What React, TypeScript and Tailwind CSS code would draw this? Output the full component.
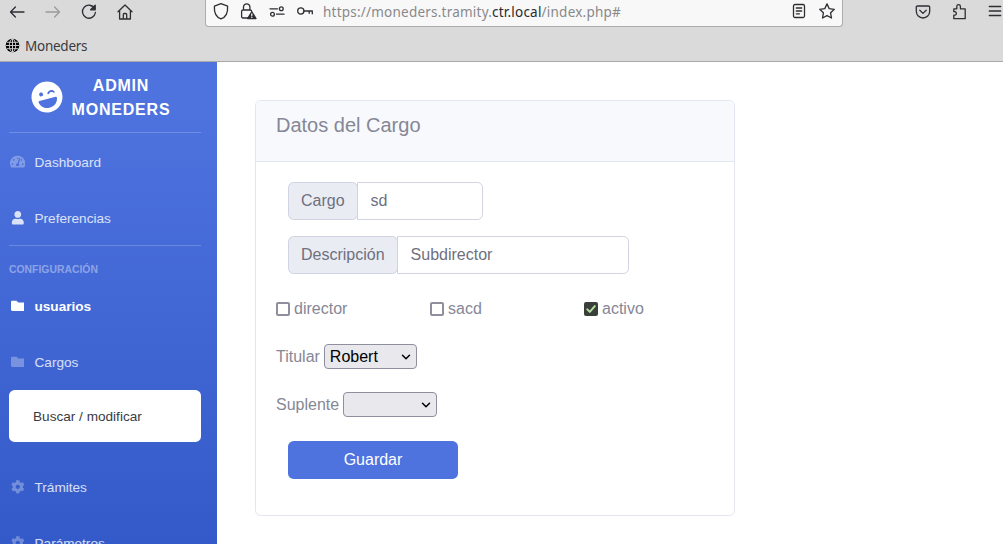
import React from 'react';
import { FaCog, FaFolder, FaLaughWink, FaTachometerAlt, FaUser } from 'react-icons/fa';

function Glyph({ children, className = '' }: { children: React.ReactNode; className?: string }) {
  return (
    <svg
      viewBox="0 0 18 18"
      fill="none"
      stroke="currentColor"
      strokeWidth="1.3"
      strokeLinecap="round"
      strokeLinejoin="round"
      className={`h-[18px] w-[18px] shrink-0 ${className}`}
    >
      {children}
    </svg>
  );
}

function BrowserBar() {
  return (
    <header className="h-[62px] border-b border-[#a9a9ac] bg-[#dadada] font-['Noto_Sans',sans-serif] text-[#2e2e33]">
      <div className="flex h-[27px]">
        <div className="flex w-[205px] shrink-0 items-start gap-[18px] pt-[3px] pl-2">
          <Glyph><path d="M2.500 9H16M7.400 4 2.500 9l4.900 5" /></Glyph>
          <Glyph className="text-[#9a9a9a]"><path d="M2 9h13.500M10.600 4l4.900 5-4.900 5" /></Glyph>
          <Glyph>
            <path d="M14.600 5.500A6.500 6.500 0 1 0 15.400 9.500" />
            <path d="M15.200 2.200v4.600h-4.600z" fill="currentColor" />
          </Glyph>
          <Glyph>
            <path d="M2 8.800 9 2l7 6.800M3.600 7.600V16h10.800V7.600M7.300 15.800v-4.300q0-1 1-1h1.400q1 0 1 1v4.300" />
          </Glyph>
        </div>
        <div className="flex w-[638px] shrink-0 items-start rounded-b border border-t-0 border-[#ababad] bg-[#f8f8f8] pt-[2px] pl-[6px]">
          <Glyph><path d="M9 1.700 15.600 4.200c.4 5.900-1.200 10.700-6.600 12.700C3.600 14.900 2 10.100 2.400 4.200Z" /></Glyph>
          <Glyph className="ml-[9px]">
            <path d="M9 16H4q-1.400 0-1.400-1.400V9.300Q2.600 8 4 8h7.200q1.400 0 1.400 1.200M4.500 8V5a3.200 3.200 0 0 1 6.400 0v3" />
            <path d="M12.800 9.800 17 16.500H8.600Z" fill="currentColor" />
            <path d="M12.800 11.800v2M12.800 15.300v.1" stroke="#f8f8f8" strokeWidth="1.200" />
          </Glyph>
          <Glyph className="ml-[11px]">
            <path d="M2 6.800h7.500M8.500 12.200H16" />
            <circle cx="13.300" cy="6.800" r="1.900" />
            <circle cx="4.500" cy="12.200" r="1.900" />
          </Glyph>
          <Glyph className="ml-[10px]">
            <circle cx="4.800" cy="9" r="3.100" />
            <path d="M8 9h8.300v2.800M13.200 9v2.300" />
          </Glyph>
          <span className="ml-[9px] w-[467px] shrink-0 text-[13.500px] leading-5 tracking-[0.220px] whitespace-nowrap text-[#88888b]">
            https://moneders.tramity.<span className="text-[#2a2a2e]">ctr.local</span>/index.php#
          </span>
          <Glyph>
            <rect x="3.500" y="2.500" width="11" height="13" rx="1.500" />
            <path d="M6.300 6h5.400M6.300 9h5.400M6.300 11.800h3.200" />
          </Glyph>
          <Glyph className="ml-[10px]">
            <path d="m9 1.900 2.200 4.700 5.100.7-3.700 3.500.9 5.200L9 13.600 4.500 16l.9-5.200L1.700 7.300l5.100-.7Z" />
          </Glyph>
        </div>
        <div className="flex items-start pt-[3px] pl-[71px]">
          <Glyph>
            <path d="M3.500 3h11q1.200 0 1.200 1.200v4.100a6.700 6.700 0 0 1-13.400 0V4.200Q2.300 3 3.500 3ZM5.800 7.300 9 10.400l3.200-3.100" />
          </Glyph>
          <Glyph className="ml-[18px]">
            <path d="M3.800 5.800h3V3.500a1.800 1.800 0 0 1 3.600 0v2.300h4.800v9.900H3.800v-3.500H5a1.800 1.800 0 0 0 0-3.500H3.800Z" />
          </Glyph>
          <Glyph className="ml-[18px]"><path d="M3.300 3.500h11.400M3.300 8h11.400M3.300 12.500h11.400" /></Glyph>
        </div>
      </div>
      <div className="flex h-[34px] items-center gap-[5px] pt-[3px] pl-[5px]">
        <svg viewBox="0 0 15 15" className="h-[15px] w-[15px] text-black" fill="none" stroke="#dadada" strokeWidth="0.900">
          <circle cx="7.500" cy="7.500" r="6.800" fill="currentColor" stroke="none" />
          <ellipse cx="7.500" cy="7.500" rx="3.200" ry="6.300" />
          <path d="M7.500 1v13M1 7.500h13M2 4.300h11M2 10.700h11" />
        </svg>
        <span className="pt-px text-[13.500px] tracking-[-0.250px] text-[#3a3a3e]">Moneders</span>
      </div>
    </header>
  );
}

function NavItem({ icon, label, active = false }: { icon: React.ReactNode; label: string; active?: boolean }) {
  return (
    <a
      className={`flex h-14 shrink-0 items-center text-[13.600px] ${active ? 'font-bold text-white' : 'text-white/80'}`}
    >
      <span className="mr-[8.500px] flex w-[17px] justify-center">{icon}</span>
      <span className="pt-[2px]">{label}</span>
    </a>
  );
}

function Sidebar() {
  return (
    <nav className="flex w-[217px] shrink-0 flex-col overflow-hidden bg-linear-to-b from-[#4e73df] from-10% to-[#345ac9] pr-4 pl-[9px]">
      <div className="flex h-[70px] shrink-0 items-center pl-[22px] text-base font-bold tracking-[0.800px] text-white">
        <FaLaughWink className="h-8 w-8 -rotate-15" />
        <div className="ml-2 w-[100px] pt-[2px] text-center leading-6">ADMIN MONEDERS</div>
      </div>
      <hr className="border-white/20" />
      <div className="h-px shrink-0" />
      <NavItem icon={<FaTachometerAlt className="h-[15.300px] w-[15.300px] shrink-0 text-white/30" />} label="Dashboard" />
      <NavItem icon={<FaUser className="text-[13.600px] text-white/80" />} label="Preferencias" />
      <hr className="-mt-px border-white/20" />
      <div className="mt-4 h-4 shrink-0 text-[10.400px] leading-4 font-bold text-white/40">CONFIGURACIÓN</div>
      <NavItem icon={<FaFolder className="text-[13.600px] text-white" />} label="usuarios" active />
      <NavItem icon={<FaFolder className="text-[13.600px] text-white/30" />} label="Cargos" />
      <div className="mb-[17px] flex h-[52px] shrink-0 items-center rounded-[5.600px] bg-white pt-[2px] pl-6 text-[13.600px] text-[#3a3b45]">
        Buscar / modificar
      </div>
      <NavItem icon={<FaCog className="text-[13.600px] text-white/30" />} label="Trámites" />
      <NavItem icon={<FaCog className="text-[13.600px] text-white/30" />} label="Parámetros" />
    </nav>
  );
}

function Field({ label, value, width }: { label: string; value: string; width: string }) {
  return (
    <div className="flex h-[38px] text-[#6e707e]">
      <label className="flex items-center rounded-[5.600px] border border-[#d1d3e2] bg-[#eaecf4] px-3">{label}</label>
      <input
        aria-label={label}
        defaultValue={value}
        className={`-ml-px rounded-r-[5.600px] border border-[#d1d3e2] bg-white pr-3 pl-[13px] ${width}`}
      />
    </div>
  );
}

function Check({ label, checked = false }: { label: string; checked?: boolean }) {
  return (
    <label className="flex w-[154px] shrink-0 items-center gap-1">
      {checked ? (
        <svg viewBox="0 0 14 14" className="h-[14px] w-[14px]" fill="none">
          <rect width="14" height="14" rx="2" fill="#39403a" />
          <path d="m3.300 7.300 2.500 2.600 5-5.800" stroke="#b9dfa4" strokeWidth="1.900" strokeLinecap="round" strokeLinejoin="round" />
        </svg>
      ) : (
        <span className="h-[14px] w-[14px] rounded-[2px] border-2 border-[#8f8f9d] bg-white" />
      )}
      {label}
    </label>
  );
}

function Picker({ label, value, width }: { label: string; value: string; width: string }) {
  return (
    <div className="flex h-[25px] items-center gap-[4px]">
      {label}
      <button
        className={`flex h-[25px] items-center justify-between rounded-[4px] border border-[#8f8f9d] bg-[#e9e9ed] pr-[5px] pl-[5px] text-black ${width}`}
      >
        <span>{value}</span>
        <svg viewBox="0 0 10 10" className="h-[10px] w-[10px]" fill="none" stroke="currentColor" strokeWidth="1.500" strokeLinecap="round" strokeLinejoin="round">
          <path d="m1.500 3.300 3.500 3.500 3.500-3.500" />
        </svg>
      </button>
    </div>
  );
}

export default function App() {
  return (
    <div className="flex h-[544px] w-[1003px] flex-col overflow-hidden bg-white">
      <BrowserBar />
      <div className="flex min-h-0 flex-1 font-['Liberation_Sans',Arial,sans-serif] text-base">
        <Sidebar />
        <main className="pt-[38px] pl-[38px] text-[#858796]">
          <section className="h-[416px] w-[480px] overflow-hidden rounded-[5.600px] border border-[#e3e6f0]">
            <h1 className="h-[61px] border-b border-[#e3e6f0] bg-[#f8f9fc] pt-3 pl-5 text-xl leading-6">
              Datos del Cargo
            </h1>
            <form className="flex flex-col px-5 pt-5" onSubmit={(e) => e.preventDefault()}>
              <div className="flex flex-col gap-4 pl-3">
                <Field label="Cargo" value="sd" width="w-[126px]" />
                <Field label="Descripción" value="Subdirector" width="w-[232px]" />
              </div>
              <div className="mt-[23px] flex h-6">
                <Check label="director" />
                <Check label="sacd" />
                <Check label="activo" checked />
              </div>
              <div className="mt-[23px] flex flex-col gap-[23px]">
                <Picker label="Titular" value="Robert" width="w-[93px]" />
                <Picker label="Suplente" value="" width="w-[94px]" />
              </div>
              <button className="mt-6 ml-3 h-[38px] w-[170px] rounded-[5.600px] bg-[#4e73df] text-white">Guardar</button>
            </form>
          </section>
        </main>
      </div>
    </div>
  );
}
